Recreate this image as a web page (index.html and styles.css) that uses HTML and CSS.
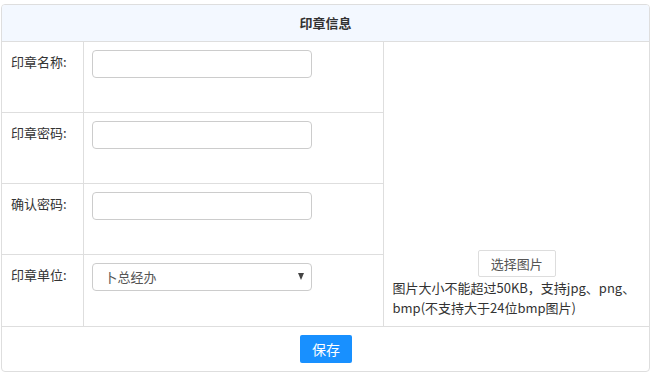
FILE: index.html
```html
<!DOCTYPE html>
<html lang="zh-CN">
<head>
<meta charset="utf-8">
<title>印章信息</title>
<link rel="stylesheet" href="styles.css">
</head>
<body>
<div class="panel">
  <table class="form">
    <colgroup>
      <col class="c-label">
      <col class="c-field">
      <col class="c-image">
    </colgroup>
    <thead>
      <tr><th colspan="3" class="title">印章信息</th></tr>
    </thead>
    <tbody>
      <tr>
        <td class="label">印章名称:</td>
        <td class="field"><input class="input" type="text"></td>
        <td class="image" rowspan="4">
          <div class="pick-wrap"><button class="pick" type="button">选择图片</button></div>
          <div class="hint">图片大小不能超过50KB，支持jpg、png、bmp(不支持大于24位bmp图片)</div>
        </td>
      </tr>
      <tr>
        <td class="label">印章密码:</td>
        <td class="field"><input class="input" type="password"></td>
      </tr>
      <tr>
        <td class="label">确认密码:</td>
        <td class="field"><input class="input" type="password"></td>
      </tr>
      <tr>
        <td class="label last">印章单位:</td>
        <td class="field">
          <div class="select">
            <span class="select-text">卜总经办</span>
            <span class="caret"></span>
          </div>
        </td>
      </tr>
    </tbody>
    <tfoot>
      <tr><td colspan="3" class="foot"><button class="save" type="button">保存</button></td></tr>
    </tfoot>
  </table>
</div>
</body>
</html>
```
FILE: styles.css
```css
* { box-sizing: border-box; }
html, body { margin: 0; padding: 0; background: #fff; }
body {
  padding: 4px 2px 0 1px;
  font-family: "Noto Sans CJK SC", "Noto Sans", sans-serif;
  font-size: 13px;
  color: #333;
}
.panel {
  width: 649px;
  border: 1px solid #dedede;
  border-radius: 4px;
  overflow: hidden;
}
.form {
  width: 100%;
  border-collapse: collapse;
  table-layout: fixed;
}
.c-label { width: 81px; }
.c-field { width: 300px; }
.form td, .form th {
  border: 1px solid #dedede;
  padding: 0;
}
.form tr > :first-child { border-left: 0; }
.form tr > :last-child { border-right: 0; }
.form thead th { border-top: 0; }
.form tfoot td { border-bottom: 0; }
.title {
  height: 36px;
  background: #f3f8ff;
  font-weight: bold;
  font-size: 13px;
  text-align: center;
  color: #333;
}
.label {
  height: 71px;
  vertical-align: top;
  padding: 10px 0 0 9px !important;
  line-height: 20px;
  white-space: nowrap;
}
.label.last { height: 72px; }
.field {
  vertical-align: top;
  padding: 8px 0 0 8px !important;
}
.input, .select {
  display: block;
  width: 220px;
  height: 28px;
  border: 1px solid #ccc;
  border-radius: 4px;
  background: #fff;
  margin: 0;
  font: inherit;
}
.select {
  display: flex;
  align-items: center;
  justify-content: space-between;
  padding: 0 7px 0 12px;
  color: #555;
}
.select-text { line-height: 20px; }
.caret {
  width: 0;
  height: 0;
  border-left: 3.5px solid transparent;
  border-right: 3.5px solid transparent;
  border-top: 7px solid #444;
}
.image {
  vertical-align: bottom;
  padding: 0 10px 8px 9px !important;
}
.pick-wrap { text-align: center; }
.pick {
  width: 78px;
  height: 27px;
  border: 1px solid #ddd;
  border-radius: 2px;
  background: #fff;
  color: #555;
  font: inherit;
  padding: 0;
  margin-left: 2px;
}
.hint {
  line-height: 20px;
  margin-top: 1px;
  color: #333;
}
.foot {
  height: 45px;
  text-align: center;
  vertical-align: top;
  padding-top: 8px !important;
}
.save {
  width: 52px;
  height: 28px;
  border: 0;
  border-radius: 2px;
  background: #1890ff;
  color: #fff;
  font: inherit;
  font-size: 14px;
  padding: 0;
  margin-left: 1px;
}
```
